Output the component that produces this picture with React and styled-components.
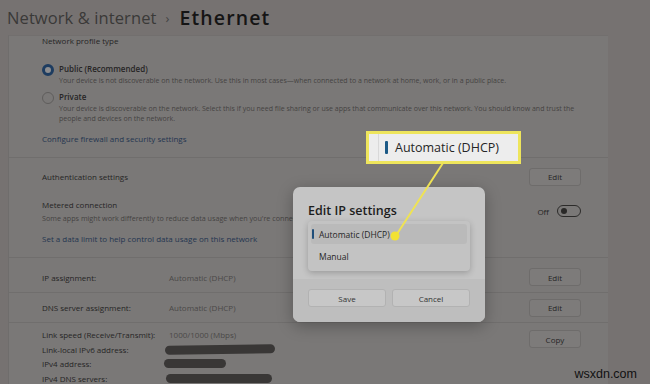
import React from 'react';
import styled, { createGlobalStyle } from 'styled-components';

const GlobalStyle = createGlobalStyle`
  body {
    margin: 0;
    background: #767271;
    font-family: "Open Sans", "Noto Sans", sans-serif;
  }
`;

const Page = styled.div`
  position: relative;
  width: 650px;
  height: 384px;
  overflow: hidden;
  background: #767271;
`;

const Header = styled.div`
  height: 35px;
  display: flex;
  align-items: center;
  padding-left: 7px;
  font-size: 16.5px;
  color: #3a3938;
  letter-spacing: 0.1px;

  .sep {
    margin: 0 10px 0 9px;
    font-size: 13px;
    color: #444;
  }

  b {
    font-weight: 600;
    font-size: 19.5px;
    letter-spacing: 1.1px;
    color: #151515;
  }
`;

const Card = styled.div`
  margin-left: 8px;
  width: 599px;
  height: 349px;
  background: #7a7877;
  border-left: 1px solid #6f6d6c;
  border-top: 1px solid #726f6e;
  color: #262525;
  font-size: 8px;
`;

const Section = styled.div`
  padding: ${p => p.pt || 0}px 27px 0 33px;
  height: ${p => p.h}px;
  box-sizing: border-box;
  border-bottom: ${p => (p.line ? '1px solid #706e6d' : 'none')};
  display: flex;
  flex-direction: column;
  justify-content: ${p => p.justify || 'flex-start'};
`;

const Label = styled.div`
  line-height: 12px;
  margin-top: ${p => p.mt || 0}px;
`;

const Option = styled.div`
  display: flex;
  gap: 5px;
  margin-top: ${p => p.mt || 0}px;
`;

const Radio = styled.span`
  flex: none;
  margin-top: 1px;
  width: 12px;
  height: 12px;
  box-sizing: border-box;
  border-radius: 50%;
  border: ${p => (p.checked ? '3.5px solid #1d3c60' : '1px solid #5f5d5c')};
  background: ${p => (p.checked ? '#8d8d8f' : 'transparent')};
`;

const OptionText = styled.div`
  strong {
    display: block;
    font-weight: 600;
    line-height: 12px;
  }
  p {
    margin: 0;
    padding-top: 1px;
    font-size: 7px;
    line-height: 10.5px;
    color: #454342;
    white-space: nowrap;
  }
`;

const Link = styled.div`
  color: #243550;
  line-height: 12px;
  margin-top: ${p => p.mt || 0}px;
`;

const Row = styled.div`
  display: flex;
  align-items: center;
  justify-content: space-between;
  height: ${p => p.h}px;
`;

const Button = styled.div`
  width: ${p => p.w || 52}px;
  height: 18px;
  box-sizing: border-box;
  border: 1px solid #6e6c6b;
  border-radius: 3px;
  background: #7d7b7a;
  display: flex;
  align-items: center;
  justify-content: center;
  color: #272626;
  font-size: 8px;
  flex: none;
`;

const Sub = styled.div`
  margin-top: 2px;
  font-size: 7.2px;
  color: #454342;
  line-height: 11px;
  width: 251px;
  white-space: nowrap;
  overflow: hidden;
`;

const ToggleWrap = styled.div`
  display: flex;
  align-items: center;
  gap: 8px;
`;

const Toggle = styled.span`
  width: 24px;
  height: 12px;
  box-sizing: border-box;
  border: 1px solid #2c2b2a;
  border-radius: 6px;
  display: flex;
  align-items: center;
  padding-left: 3px;

  &::before {
    content: '';
    width: 6px;
    height: 6px;
    border-radius: 50%;
    background: #2a2928;
  }
`;

const PropRow = styled.div`
  display: grid;
  grid-template-columns: 127px 1fr;
  align-items: center;
  height: ${p => p.h || 14.7}px;
`;

const Value = styled.span`
  color: #4a4847;
`;

const Blob = styled.span`
  display: block;
  width: ${p => p.w}px;
  height: 9px;
  margin-left: ${p => p.ml || -4}px;
  border-radius: 5px;
  background: #393736;
  transform: rotate(${p => p.tilt || 0}deg);
`;

const PropGroup = styled.div`
  display: flex;
  justify-content: space-between;
  align-items: flex-start;
  padding: 4px 27px 0 33px;

  ${Button} {
    margin-top: 3px;
  }
`;

const Dialog = styled.div`
  position: absolute;
  left: 293px;
  top: 187px;
  width: 192px;
  height: 135px;
  border-radius: 7px;
  overflow: hidden;
  background: #c5c5c5;
  box-shadow: 0 4px 16px rgba(0, 0, 0, 0.28);
  display: flex;
  flex-direction: column;
  color: #262626;
`;

const DialogBody = styled.div`
  padding: 16px 15px 0 15px;
  height: 76px;

  h2 {
    margin: 0 0 2px 0;
    font-size: 12.5px;
    font-weight: 600;
    line-height: 16px;
    color: #1d1d1d;
  }
`;

const ListBox = styled.div`
  width: 162px;
  height: 50px;
  box-sizing: border-box;
  padding: 3px;
  border-radius: 4px;
  background: #c3c3c3;
  box-shadow: 0 2px 6px rgba(0, 0, 0, 0.22);
  font-size: 8.5px;
`;

const ListItem = styled.div`
  position: relative;
  height: ${p => (p.selected ? 20 : 24)}px;
  border-radius: 3px;
  background: ${p => (p.selected ? '#bababa' : 'transparent')};
  display: flex;
  align-items: center;
  padding-left: 8px;

  &::before {
    content: '';
    display: ${p => (p.selected ? 'block' : 'none')};
    position: absolute;
    left: 1px;
    top: 5px;
    width: 2px;
    height: 10px;
    border-radius: 1px;
    background: #1f4e7a;
  }
`;

const DialogFooter = styled.div`
  flex: 1;
  background: #bebebe;
  display: flex;
  gap: 6px;
  padding: 10px 15px 0 15px;
`;

const DialogButton = styled.div`
  width: 78px;
  height: 18px;
  box-sizing: border-box;
  border: 1px solid #b2b2b2;
  border-radius: 3px;
  background: #c7c7c7;
  display: flex;
  align-items: center;
  justify-content: center;
  font-size: 8px;
  color: #333;
`;

const Callout = styled.div`
  position: absolute;
  left: 366px;
  top: 131px;
  width: 155px;
  height: 33px;
  box-sizing: border-box;
  border: 3px solid #eee55c;
  background: #ededed;
  display: flex;
  align-items: center;
  padding-left: 16px;
  gap: 7px;
  font-size: 12.5px;
  color: #262626;

  &::before {
    content: '';
    position: absolute;
    left: 9px;
    top: 0;
    bottom: 0;
    width: 1px;
    background: #d9d9d9;
  }
`;

const CalloutBar = styled.span`
  width: 3px;
  height: 13px;
  border-radius: 1px;
  background: #1c5a86;
`;

const Pointer = styled.svg`
  position: absolute;
  left: 0;
  top: 0;
  pointer-events: none;
`;

const Watermark = styled.div`
  position: absolute;
  right: 13px;
  bottom: 3px;
  font-family: "Liberation Sans", sans-serif;
  font-size: 12.5px;
  color: #111;
`;

export default function App() {
  return (
    <Page>
      <GlobalStyle />
      <Header>
        Network &amp; internet<span className="sep">›</span><b>Ethernet</b>
      </Header>
      <Card>
        <Section h={122} line>
          <Label mt={-1}>Network profile type</Label>
          <Option mt={16}>
            <Radio checked />
            <OptionText>
              <strong>Public (Recommended)</strong>
              <p>Your device is not discoverable on the network. Use this in most cases—when connected to a network at home, work, or in a public place.</p>
            </OptionText>
          </Option>
          <Option mt={4}>
            <Radio />
            <OptionText>
              <strong>Private</strong>
              <p>
                Your device is discoverable on the network. Select this if you need file sharing or use apps that communicate over this network. You should know and trust the
                <br />
                people and devices on the network.
              </p>
            </OptionText>
          </Option>
          <Link mt={8}>Configure firewall and security settings</Link>
        </Section>
        <Section h={100} line>
          <Row h={37}>
            <Label>Authentication settings</Label>
            <Button>Edit</Button>
          </Row>
          <Row h={32}>
            <div>
              <Label>Metered connection</Label>
              <Sub>Some apps might work differently to reduce data usage when you're connected to this network</Sub>
            </div>
            <ToggleWrap>
              Off
              <Toggle />
            </ToggleWrap>
          </Row>
          <Link mt={6}>Set a data limit to help control data usage on this network</Link>
        </Section>
        <Section h={35} line justify="center" pt={4}>
          <Row h={20}>
            <PropRow>
              <span>IP assignment:</span>
              <Value>Automatic (DHCP)</Value>
            </PropRow>
            <Button>Edit</Button>
          </Row>
        </Section>
        <Section h={30} line justify="center">
          <Row h={20}>
            <PropRow>
              <span>DNS server assignment:</span>
              <Value>Automatic (DHCP)</Value>
            </PropRow>
            <Button>Edit</Button>
          </Row>
        </Section>
        <PropGroup>
          <div>
            <PropRow>
              <span>Link speed (Receive/Transmit):</span>
              <Value>1000/1000 (Mbps)</Value>
            </PropRow>
            <PropRow>
              <span>Link-local IPv6 address:</span>
              <Blob w={110} tilt={-0.8} />
            </PropRow>
            <PropRow>
              <span>IPv4 address:</span>
              <Blob w={62} ml={-5} />
            </PropRow>
            <PropRow>
              <span>IPv4 DNS servers:</span>
              <Blob w={106} ml={-3} />
            </PropRow>
          </div>
          <Button>Copy</Button>
        </PropGroup>
      </Card>

      <Dialog>
        <DialogBody>
          <h2>Edit IP settings</h2>
          <ListBox>
            <ListItem selected>Automatic (DHCP)</ListItem>
            <ListItem>Manual</ListItem>
          </ListBox>
        </DialogBody>
        <DialogFooter>
          <DialogButton>Save</DialogButton>
          <DialogButton>Cancel</DialogButton>
        </DialogFooter>
      </Dialog>

      <Callout>
        <CalloutBar />
        Automatic (DHCP)
      </Callout>
      <Pointer width="650" height="384">
        <line x1="443" y1="163" x2="397" y2="234" stroke="#efe353" strokeWidth="2" />
        <circle cx="395" cy="236" r="4.5" fill="#f2e233" />
      </Pointer>

      <Watermark>wsxdn.com</Watermark>
    </Page>
  );
}
